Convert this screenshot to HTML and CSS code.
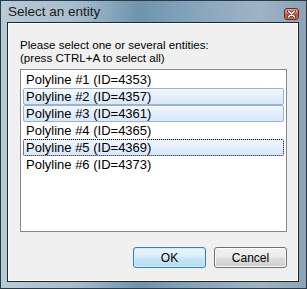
FILE: index.html
```html
<!DOCTYPE html>
<html lang="en">

<head>
    <meta charset="UTF-8">
    <title>Select an entity</title>
    <link rel="stylesheet" href="styles.css">
</head>

<body>

    <div class="window">
        <!-- title bar -->
        <div class="titlebar">
            <span class="title">Select an entity</span>
            <span class="close">
                <svg width="9" height="8" viewBox="0 0 9 8">
                    <path d="M1.5 1.2 L7.5 6.8 M7.5 1.2 L1.5 6.8" stroke="#5a1a10" stroke-width="3" stroke-linecap="round"/>
                    <path d="M1.5 1.2 L7.5 6.8 M7.5 1.2 L1.5 6.8" stroke="#fff" stroke-width="1.6" stroke-linecap="round"/>
                </svg>
            </span>
        </div>

        <div class="client">
            <div class="label">
                Please select one or several entities:<br>
                (press CTRL+A to select all)
            </div>

            <div class="listbox">
                <div class="row">Polyline #1 (ID=4353)</div>
                <div class="row selected">Polyline #2 (ID=4357)</div>
                <div class="row selected">Polyline #3 (ID=4361)</div>
                <div class="row">Polyline #4 (ID=4365)</div>
                <div class="row selected focused">Polyline #5 (ID=4369)</div>
                <div class="row">Polyline #6 (ID=4373)</div>
            </div>

            <div class="buttons">
                <button class="btn btn-default">OK</button>
                <button class="btn">Cancel</button>
            </div>
        </div>
    </div>

</body>

</html>
```

FILE: styles.css
```css
* {
    box-sizing: border-box;
}

body {
    margin: 0;
    padding: 0;
    background-color: #fff;
    font-family: 'Liberation Sans', Arial, sans-serif;
}

.window {
    width: 307px;
    height: 289px;
    padding: 0 7px 6px 6px;
    display: flex;
    flex-direction: column;
    border: 1px solid #2c3a44;
    background: linear-gradient(to right, #b9cad7 0%, #a6bccd 25%, #6f94ae 45%, #88a6bb 65%, #9eb4c5 85%, #8aa3b6 100%);
}

.titlebar {
    height: 21px;
    display: flex;
    align-items: center;
    justify-content: space-between;
    padding-left: 1px;
}

.title {
    font-size: 13.5px;
    color: #1a1a1a;
    margin-top: -1px;
}

.close {
    width: 15px;
    height: 12px;
    margin-top: 4px;
    display: flex;
    align-items: center;
    justify-content: center;
    border: 1px solid #6b2a20;
    border-radius: 3px;
    background: linear-gradient(#e8a598 0%, #d47866 45%, #c0503c 55%, #cf6f55 100%);
}

.client {
    flex: 1;
    display: flex;
    flex-direction: column;
    border: 1px solid #1c2830;
    box-shadow: inset 0 0 0 1px #fff;
    background-color: #f0f0f0;
    padding: 15px 11px 13px 12px;
}

.label {
    font-size: 11.6px;
    line-height: 13px;
    color: #000;
    margin-bottom: 5px;
}

.listbox {
    height: 163px;
    border: 1px solid #828790;
    background-color: #fff;
    padding-top: 1px;
}

.row {
    height: 17px;
    margin: 0 2px;
    padding: 0 2px;
    border: 1px solid transparent;
    border-radius: 2px;
    font-size: 13px;
    line-height: 15px;
    color: #000;
    white-space: nowrap;
}

.row.selected {
    border-color: #9db3c9;
    background: linear-gradient(#f1f7fe, #d6e7fb);
}

.row.focused {
    border: 1px dotted #000;
}

.buttons {
    display: flex;
    justify-content: flex-end;
    gap: 8px;
    margin-top: auto;
}

.btn {
    width: 73px;
    height: 21px;
    padding: 0;
    font-family: 'Liberation Sans', Arial, sans-serif;
    font-size: 12px;
    color: #000;
    border: 1px solid #707070;
    border-radius: 3px;
    box-shadow: inset 0 0 0 1px #fcfcfc;
    background: linear-gradient(#f2f2f2 0%, #ebebeb 48%, #dddddd 52%, #cfcfcf 100%);
}

.btn-default {
    border-color: #3c7fb1;
    box-shadow: inset 0 0 0 1px #cdeefc;
    background: linear-gradient(#e8f5fc 0%, #d9effb 48%, #c6e6f8 52%, #b6dcf2 100%);
}
```
